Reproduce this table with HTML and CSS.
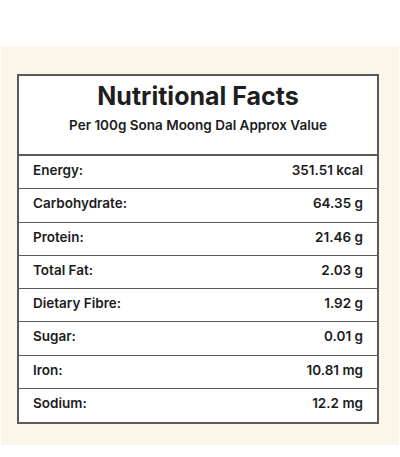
FILE: index.html
```html
<!DOCTYPE html>
<html>
<head>
<meta charset="utf-8">
<link rel="stylesheet" href="styles.css">
</head>
<body>
<div class="page">
  <section class="panel">
    <div class="facts">
      <header class="facts-head">
        <h1 class="facts-title">Nutritional Facts</h1>
        <p class="facts-sub">Per 100g Sona Moong Dal Approx Value</p>
      </header>
      <div class="row"><span>Energy:</span><span>351.51 kcal</span></div>
      <div class="row"><span>Carbohydrate:</span><span>64.35 g</span></div>
      <div class="row"><span>Protein:</span><span>21.46 g</span></div>
      <div class="row"><span>Total Fat:</span><span>2.03 g</span></div>
      <div class="row"><span>Dietary Fibre:</span><span>1.92 g</span></div>
      <div class="row"><span>Sugar:</span><span>0.01 g</span></div>
      <div class="row"><span>Iron:</span><span>10.81 mg</span></div>
      <div class="row"><span>Sodium:</span><span>12.2 mg</span></div>
    </div>
  </section>
</div>
</body>
</html>
```
FILE: styles.css
```css
html, body {
  margin: 0;
  padding: 0;
  background: #ffffff;
}
body {
  font-family: Inter, "Noto Sans", sans-serif;
  color: #1c1c1c;
}
.page {
  padding-top: 46px;
}
.panel {
  margin: 0 1px;
  background: #fcf5ea;
  padding: 28px 20px 21px 16px;
}
.facts {
  background: #ffffff;
  border: 2px solid #5a5a5a;
}
.facts-head {
  height: 80px;
  text-align: center;
  border-bottom: 2px solid #5a5a5a;
  padding-top: 4px;
  box-sizing: border-box;
}
.facts-title {
  margin: 0;
  font-size: 25px;
  font-weight: 700;
  line-height: 32px;
  color: #1e1e1e;
}
.facts-sub {
  margin: 4px 0 0;
  font-size: 13.5px;
  font-weight: 600;
  line-height: 18px;
}
.row {
  display: flex;
  justify-content: space-between;
  align-items: center;
  height: 33.25px;
  box-sizing: border-box;
  padding: 0 14px 4px 14px;
  font-size: 13.5px;
  font-weight: 600;
  border-bottom: 1.5px solid #5a5a5a;
}
.row:last-child {
  border-bottom: none;
}
```
